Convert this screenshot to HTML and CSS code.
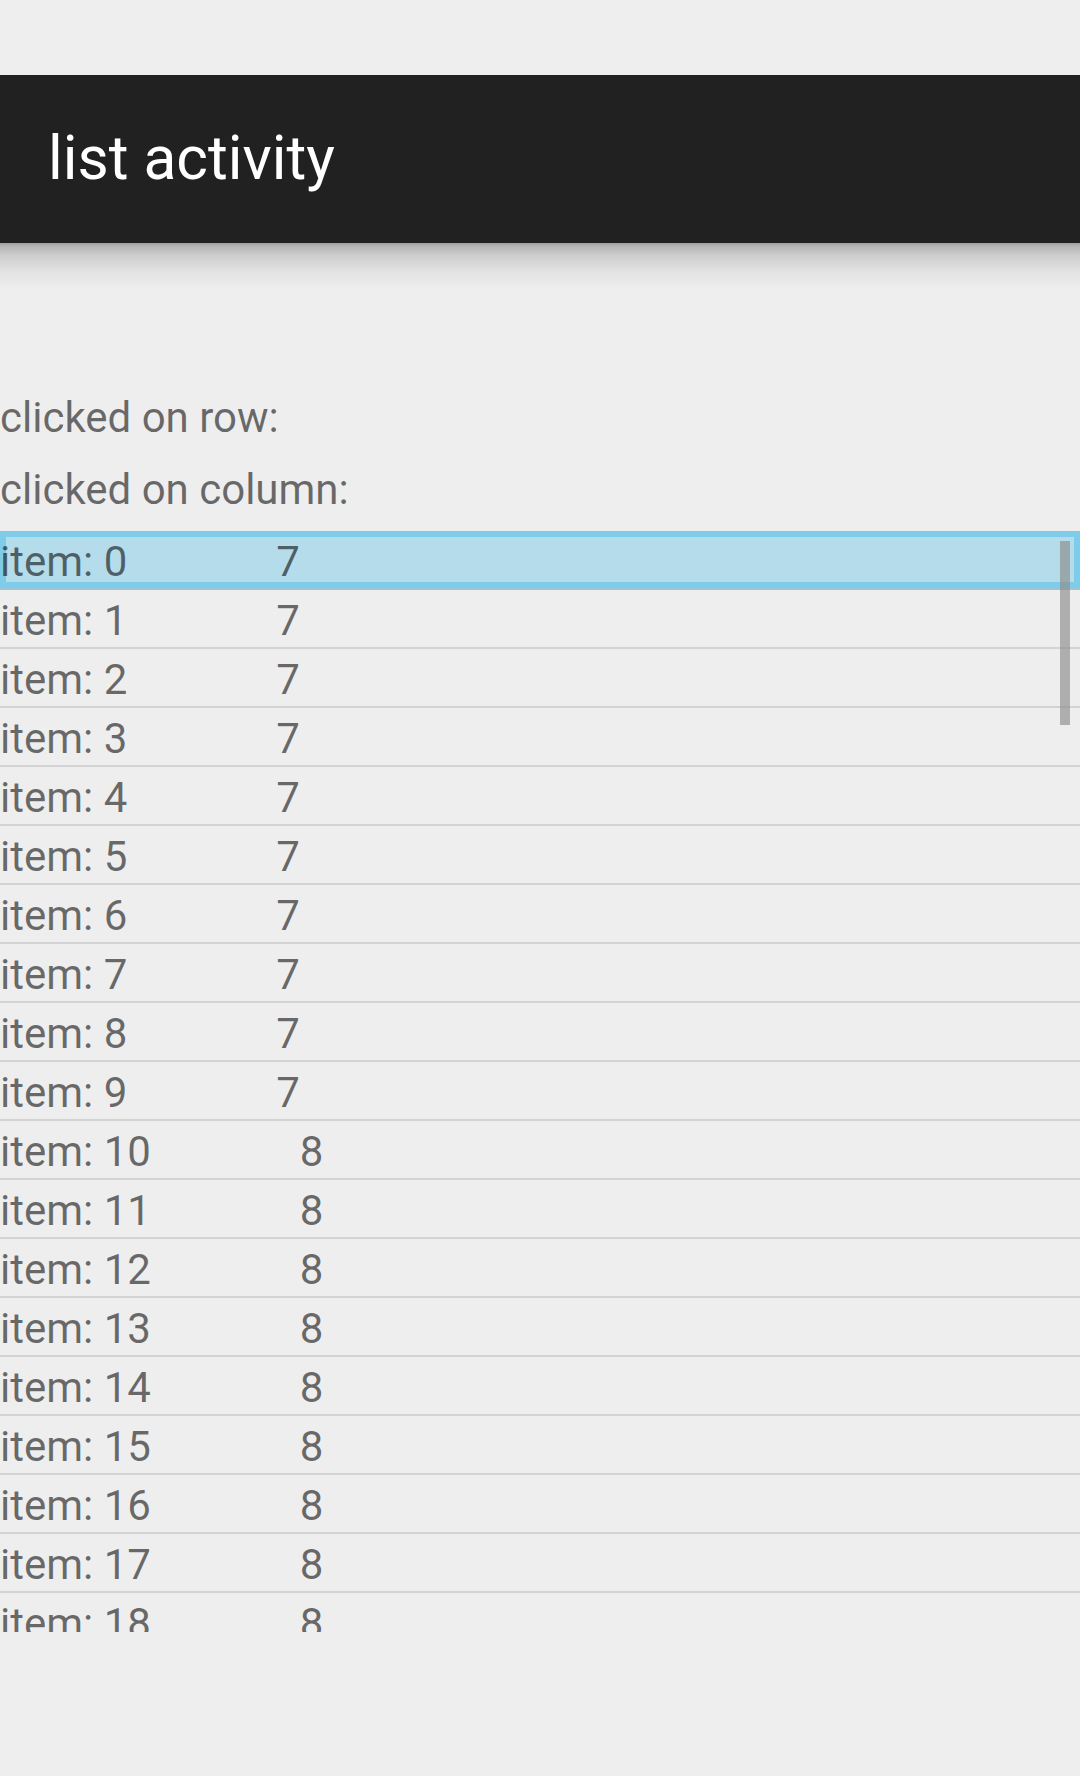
FILE: index.html
```html
<!DOCTYPE html>
<html>
<head>
<meta charset="utf-8">
<link rel="stylesheet" href="styles.css">
</head>
<body>
<div class="screen">
  <div class="status"></div>
  <header class="toolbar"><span class="title">list activity</span></header>
  <div class="toolbar-shadow"></div>
  <main class="content">
    <div class="info">
      <div class="info-line">clicked on row:</div>
      <div class="info-line">clicked on column:</div>
    </div>
    <div class="list">
      <div class="row selected"><span class="label">item: 0</span><span class="value">7</span></div>
      <div class="row"><span class="label">item: 1</span><span class="value">7</span></div>
      <div class="row"><span class="label">item: 2</span><span class="value">7</span></div>
      <div class="row"><span class="label">item: 3</span><span class="value">7</span></div>
      <div class="row"><span class="label">item: 4</span><span class="value">7</span></div>
      <div class="row"><span class="label">item: 5</span><span class="value">7</span></div>
      <div class="row"><span class="label">item: 6</span><span class="value">7</span></div>
      <div class="row"><span class="label">item: 7</span><span class="value">7</span></div>
      <div class="row"><span class="label">item: 8</span><span class="value">7</span></div>
      <div class="row"><span class="label">item: 9</span><span class="value">7</span></div>
      <div class="row"><span class="label">item: 10</span><span class="value">8</span></div>
      <div class="row"><span class="label">item: 11</span><span class="value">8</span></div>
      <div class="row"><span class="label">item: 12</span><span class="value">8</span></div>
      <div class="row"><span class="label">item: 13</span><span class="value">8</span></div>
      <div class="row"><span class="label">item: 14</span><span class="value">8</span></div>
      <div class="row"><span class="label">item: 15</span><span class="value">8</span></div>
      <div class="row"><span class="label">item: 16</span><span class="value">8</span></div>
      <div class="row"><span class="label">item: 17</span><span class="value">8</span></div>
      <div class="row"><span class="label">item: 18</span><span class="value">8</span></div>
      <div class="row"><span class="label">item: 19</span><span class="value">8</span></div>
      <div class="scrollbar"></div>
    </div>
  </main>
</div>
</body>
</html>
```

FILE: styles.css
```css
* { box-sizing: border-box; }
html, body {
  margin: 0;
  padding: 0;
  background: #eeeeee;
}
body {
  font-family: Roboto, "Noto Sans", sans-serif;
}
.screen {
  width: 1080px;
  height: 1776px;
  overflow: hidden;
  background: #eeeeee;
  display: flex;
  flex-direction: column;
}
.status {
  height: 75px;
  flex: none;
}
.toolbar {
  height: 168px;
  flex: none;
  background: #212121;
  padding-left: 48px;
  display: flex;
  align-items: center;
}
.title {
  color: #ffffff;
  font-size: 60.5px;
  line-height: 1;
}
.toolbar-shadow {
  height: 46px;
  flex: none;
  background: linear-gradient(#9e9e9e 0px, #b4b4b4 3px, #cdcdcd 12px, #e2e2e2 28px, #eeeeee 46px);
}
.content {
  flex: none;
}
.info {
  padding-top: 93px;
}
.info-line {
  font-size: 42px;
  line-height: 72px;
  color: rgba(0, 0, 0, 0.57);
}
.list {
  position: relative;
  margin-top: 5px;
  height: 1101px;
  overflow: hidden;
}
.row {
  height: 59px;
  padding-top: 4px;
  border-bottom: 2px solid #d3d3d3;
  display: flex;
  font-size: 42px;
  line-height: 53px;
  color: rgba(0, 0, 0, 0.57);
}
.row .value {
  margin-left: 149px;
}
.row.selected {
  background: #b4dcea;
  box-shadow: inset 0 0 0 6px #7ecbea;
  border-bottom-color: #9cc6d6;
}
.scrollbar {
  position: absolute;
  top: 10px;
  right: 10px;
  width: 10px;
  height: 184px;
  background: rgba(141, 141, 141, 0.67);
}
```
